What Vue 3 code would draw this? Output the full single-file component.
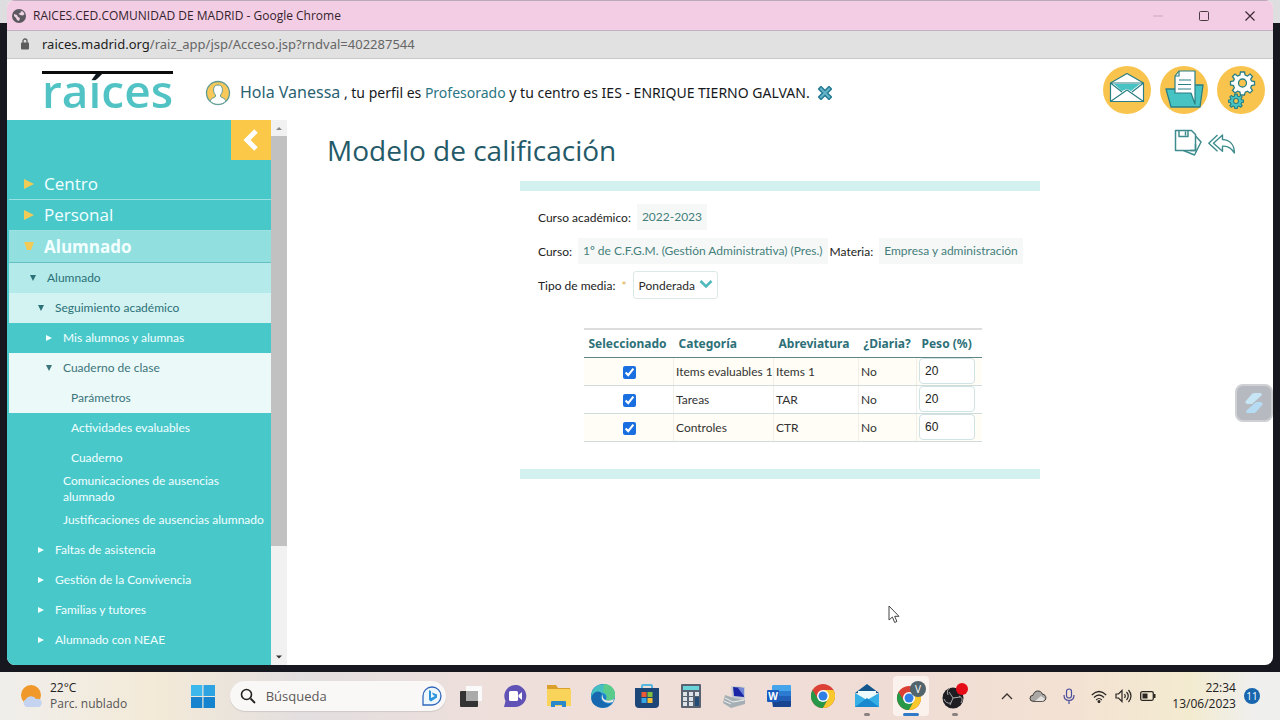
<script setup>
import { ref } from 'vue'

const sections = [
  { label: 'Centro', open: false },
  { label: 'Personal', open: false },
  { label: 'Alumnado', open: true },
]

const items = [
  { label: 'Alumnado', level: 1, arrow: 'down', tone: 'tone-a' },
  { label: 'Seguimiento académico', level: 2, arrow: 'down', tone: 'tone-b' },
  { label: 'Mis alumnos y alumnas', level: 3, arrow: 'right' },
  { label: 'Cuaderno de clase', level: 3, arrow: 'down', tone: 'tone-c' },
  { label: 'Parámetros', level: 4, tone: 'tone-c' },
  { label: 'Actividades evaluables', level: 4 },
  { label: 'Cuaderno', level: 4 },
  { label: 'Comunicaciones de ausencias alumnado', level: 3, tall: true },
  { label: 'Justificaciones de ausencias alumnado', level: 3 },
  { label: 'Faltas de asistencia', level: 2, arrow: 'right' },
  { label: 'Gestión de la Convivencia', level: 2, arrow: 'right' },
  { label: 'Familias y tutores', level: 2, arrow: 'right' },
  { label: 'Alumnado con NEAE', level: 2, arrow: 'right' },
]

const rows = ref([
  { on: true, name: 'Items evaluables 1', abbr: 'Items 1', daily: 'No', weight: '20' },
  { on: true, name: 'Tareas', abbr: 'TAR', daily: 'No', weight: '20' },
  { on: true, name: 'Controles', abbr: 'CTR', daily: 'No', weight: '60' },
])
const average = ref('Ponderada')
</script>

<template>
  <div class="desktop">
    <div class="window">
      <div class="titlebar">
        <svg width="14" height="14" viewBox="0 0 14 14" aria-hidden="true">
          <circle cx="7" cy="7" r="7" fill="#5b5860" />
          <path d="M2 5l3 1 1 2 2 1-1 3-2-1-1-2-2-2zM6 1.500l3 .5-.5 2-2 .5L8 6l3 .5L12.500 5 11 2.500z" fill="#efd3e2" />
        </svg>
        <span class="caption">RAICES.CED.COMUNIDAD DE MADRID - Google Chrome</span>
        <div class="winbtns">
          <button aria-label="Minimizar"><svg width="12" height="12" viewBox="0 0 12 12"><path d="M1 6h10" stroke="#c9a9bc" /></svg></button>
          <button aria-label="Maximizar"><svg width="12" height="12" viewBox="0 0 12 12"><rect x="1.500" y="1.500" width="9" height="9" rx="1" fill="none" stroke="#4a3a44" /></svg></button>
          <button aria-label="Cerrar"><svg width="12" height="12" viewBox="0 0 12 12"><path d="M1.500 1.500l9 9M10.500 1.500l-9 9" stroke="#3a2a34" stroke-width="1.200" /></svg></button>
        </div>
      </div>

      <div class="urlbar">
        <svg width="10" height="12" viewBox="0 0 10 12" aria-hidden="true">
          <rect x="1" y="4.500" width="8" height="7" rx="1" fill="#5c5c5c" />
          <path d="M3 5V3a2 2 0 0 1 4 0v2" fill="none" stroke="#5c5c5c" stroke-width="1.300" />
        </svg>
        <span class="url"><b>raices.madrid.org</b>/raiz_app/jsp/Acceso.jsp?rndval=402287544</span>
      </div>

      <header class="apphead">
        <div class="logo">raíces</div>
        <svg class="avatar" width="26" height="26" viewBox="0 0 26 26" aria-hidden="true">
          <circle cx="13" cy="13" r="11.500" fill="#f8c95a" stroke="#5d9a94" stroke-width="1.300" />
          <path d="M5 21c1-3 4-3 5.500-4.500V15C8.500 13 8.500 10.500 8.700 8.500 9 6 11 5 13 5s4 1 4.300 3.500c.2 2 .2 4.500-1.800 6.500v1.500C17 18 20 18 21 21c-4 4.500-12 4.500-16 0z" fill="#fff" stroke="#5d9a94" />
        </svg>
        <p class="hello">
          <a href="#" class="who">Hola Vanessa</a> , tu perfil es <a href="#">Profesorado</a> y tu centro es IES - ENRIQUE TIERNO GALVAN.
        </p>
        <button class="logout" aria-label="Salir">
          <svg width="14" height="14" viewBox="0 0 14 14"><path d="M3 3l8 8M11 3l-8 8" stroke="#267b94" stroke-width="5" stroke-linecap="square" /><path d="M3 3l8 8M11 3l-8 8" stroke="#65b4c8" stroke-width="2" stroke-linecap="square" /></svg>
        </button>
        <nav class="round">
          <button aria-label="Mensajes">
            <svg width="48" height="48" viewBox="0 0 48 48" stroke="#2a7f84" stroke-linejoin="round">
              <circle cx="24" cy="24" r="24" fill="#f9c44e" stroke="none" />
              <path d="M7.500 17L24 7.500 40.500 17v18.500h-33z" fill="#fff" stroke-width="1.200" />
              <path d="M11 18h26l-9 7-4-2-5 2z" fill="#46c3c2" stroke="none" />
              <path d="M7.500 17h33L29 26M7.500 17L19 26M7.500 35.500L24 24l16.500 11.500" fill="none" stroke-width="1.200" />
            </svg>
          </button>
          <button aria-label="Documentos">
            <svg width="48" height="48" viewBox="0 0 48 48" stroke="#2a7f84" stroke-linejoin="round">
              <circle cx="24" cy="24" r="24" fill="#f9c44e" stroke="none" />
              <path d="M6 23h10l1-4h26l-3 22H11z" fill="#46c3c2" stroke-width="1.300" />
              <path d="M15 27V10l4-5h16v33l-4-11z" fill="#fff" stroke-width="1.200" />
              <path d="M15 10h4V5M19 14h12M18 18.500h13M18 23h13" fill="none" stroke-width="1.200" />
            </svg>
          </button>
          <button aria-label="Configuración">
            <svg width="48" height="48" viewBox="0 0 48 48" stroke="#2a7f84">
              <circle cx="24" cy="24" r="24" fill="#f9c44e" stroke="none" />
              <g transform="translate(25.500 17)" stroke-width="1.300">
                <path d="M-2-11h4l.6 3L5-7l2.600-2L10-6.500 8.200-4 9-2l3 .5v3.500l-3 .5-.8 2.300L10 7.500 7.500 10 5 8.200l-2.300 1-.7 2.800h-4l-.6-2.900L-5 8.200-7.500 10-10 7.500-8.200 5-9 2.500-12 2v-3.500L-9-2l.8-2L-10-6.500-7.500-9-5-7l2.400-1z" fill="#fff" />
                <circle r="4" fill="#f9c44e" />
              </g>
              <g transform="translate(19 35) scale(.62)" stroke-width="1.800">
                <path d="M-2-11h4l.6 3L5-7l2.600-2L10-6.500 8.200-4 9-2l3 .5v3.500l-3 .5-.8 2.300L10 7.500 7.500 10 5 8.200l-2.300 1-.7 2.800h-4l-.6-2.900L-5 8.200-7.500 10-10 7.500-8.200 5-9 2.500-12 2v-3.500L-9-2l.8-2L-10-6.500-7.500-9-5-7l2.400-1z" fill="#46c3c2" />
                <circle r="4" fill="#f9c44e" />
              </g>
            </svg>
          </button>
        </nav>
      </header>

      <div class="body">
        <aside class="side">
          <button class="collapse" aria-label="Ocultar menú">
            <svg width="18" height="24" viewBox="0 0 18 24"><path d="M14 3L5 12l9 9" fill="none" stroke="#fff" stroke-width="5" /></svg>
          </button>
          <ul class="menu">
            <li v-for="s in sections" :key="s.label">
              <a href="#" class="section" :class="{ open: s.open }">
                <svg width="12" height="12" viewBox="0 0 12 12"><path :d="s.open ? 'M1 1h10L8 9H4z' : 'M1 1l10 5-10 5z'" fill="#f2cb57" /></svg>
                <span>{{ s.label }}</span>
              </a>
            </li>
            <li v-for="i in items" :key="i.label">
              <a href="#" class="item" :class="['level-' + i.level, i.tone, { tall: i.tall }]">
                <svg width="8" height="8" viewBox="0 0 8 8"><path v-if="i.arrow" :d="i.arrow === 'down' ? 'M1 1h6L4 7z' : 'M1 1l6 3-6 3z'" fill="currentColor" /></svg>
                <span>{{ i.label }}</span>
              </a>
            </li>
          </ul>
        </aside>
        <div class="scroll" aria-hidden="true">
          <svg width="16" height="16" viewBox="0 0 16 16"><path d="M5 10l3-3 3 3z" fill="#8a8a8a" /></svg>
          <div class="thumb"></div>
          <svg width="16" height="16" viewBox="0 0 16 16"><path d="M5 6.500h6l-3 3z" fill="#333" /></svg>
        </div>

        <main class="main">
          <div class="pagehead">
            <h1>Modelo de calificación</h1>
            <div class="tools">
              <button aria-label="Guardar">
                <svg width="28" height="28" viewBox="0 0 28 28" fill="none" stroke="#3f8c8e" stroke-width="1.500" stroke-linejoin="round">
                  <path d="M1.500 1.500h16l4 4v16h-20zM5 1.500v6h9v-6M11.500 2.500v4" />
                  <path d="M21.500 7l5.500 6-6.500 13-11-4.500M21.500 15v6.500H16" />
                </svg>
              </button>
              <button aria-label="Volver">
                <svg width="28" height="20" viewBox="0 0 28 20" fill="none" stroke="#3f8c8e" stroke-width="1.400" stroke-linejoin="round">
                  <path d="M9.500 1L.8 9.200l8.700 8M14.500 1L5.500 9.200l9 8v-5c5-.5 8.500 1 11.800 6.800C26.500 11 22 6 14.500 5.500z" />
                </svg>
              </button>
            </div>
          </div>

          <form class="panel" @submit.prevent>
            <div class="line">
              <span class="lab">Curso académico:</span><span class="val">2022-2023</span>
            </div>
            <div class="line">
              <span class="lab">Curso:</span><span class="val">1º de C.F.G.M. (Gestión Administrativa) (Pres.)</span>
              <span class="lab">Materia:</span><span class="val">Empresa y administración</span>
            </div>
            <div class="line">
              <label class="lab" for="media">Tipo de media:</label><span class="req">*</span>
              <span class="pick">
                <select id="media" v-model="average"><option>Ponderada</option></select>
                <svg width="14" height="10" viewBox="0 0 14 10" aria-hidden="true"><path d="M1.500 2L7 7.500 12.500 2" fill="none" stroke="#4fb9bb" stroke-width="2.600" /></svg>
              </span>
            </div>

            <table>
              <colgroup><col class="c1"><col class="c2"><col class="c3"><col class="c4"><col class="c5"></colgroup>
              <thead>
                <tr><th>Seleccionado</th><th>Categoría</th><th>Abreviatura</th><th>¿Diaria?</th><th>Peso (%)</th></tr>
              </thead>
              <tbody>
                <tr v-for="r in rows" :key="r.name">
                  <td class="check"><input v-model="r.on" type="checkbox" :aria-label="'Seleccionar ' + r.name"></td>
                  <td>{{ r.name }}</td>
                  <td>{{ r.abbr }}</td>
                  <td>{{ r.daily }}</td>
                  <td><input v-model="r.weight" class="weight" type="text" :aria-label="'Peso de ' + r.name"></td>
                </tr>
              </tbody>
            </table>
          </form>
        </main>
      </div>

      <button class="floating" aria-label="Asistente">
        <svg width="22" height="24" viewBox="0 0 22 24"><path d="M2 11L9 3q1-1 2-1h7l1 2-10 9H4z" fill="#c6e6f5" /><path d="M20 13l-7 8q-1 1-2 1H4l-1-2 10-9h5z" fill="#b5dcf3" /></svg>
      </button>
      <svg class="cursor" width="12" height="19" viewBox="0 0 12 19" aria-hidden="true"><path d="M1 1v14l3.400-3 2.300 5.500 2.200-1L6.700 11.300H11z" fill="#fff" stroke="#444" /></svg>
    </div>

    <footer class="taskbar">
      <div class="weather">
        <svg width="24" height="24" viewBox="0 0 24 24" aria-hidden="true"><circle cx="11" cy="11" r="10" fill="#f0982a" /><path d="M6 23a4.500 4.500 0 0 1 0-8 6 6 0 0 1 10 0 4 4 0 0 1 3 8z" fill="#c3d3f0" /></svg>
        <div><div>22°C</div><div class="dim">Parc. nublado</div></div>
      </div>

      <div class="center">
        <button class="app" aria-label="Inicio"><svg width="24" height="24" viewBox="0 0 24 24"><path d="M0 1h11.300v11H0z" fill="#3cb8ec" /><path d="M12.500 1H24v11H12.500z" fill="#2ea3e2" /><path d="M0 13h11.300v11H0zM12.500 13H24v11H12.500z" fill="#1583cd" /></svg></button>
        <label class="search">
          <svg width="16" height="16" viewBox="0 0 16 16"><circle cx="6.500" cy="6.500" r="5" fill="none" stroke="#222" stroke-width="1.600" /><path d="M10.500 10.500L15 15" stroke="#222" stroke-width="1.800" /></svg>
          <input type="text" placeholder="Búsqueda" aria-label="Búsqueda">
          <svg width="20" height="20" viewBox="0 0 20 20"><path d="M1 19v-9a9 9 0 1 1 9 9z" fill="#eef8fc" stroke="#3267bd" stroke-width="1.300" /><path d="M7 4l2 1v7l4-2-2-1-1-2.500 5 2v3l-6 4-2-1.500z" fill="#2c93dc" /></svg>
        </label>
        <button class="app" aria-label="Vista de tareas"><svg width="24" height="24" viewBox="0 0 24 24"><rect x="7" y="2" width="16" height="15" fill="#fafafa" /><rect x="1" y="7" width="18" height="16" rx="1" fill="#333" /><rect x="7" y="7" width="12" height="10" fill="#aaa" /></svg></button>
        <button class="app" aria-label="Chat"><svg width="24" height="24" viewBox="0 0 24 24"><path d="M1 23l1.500-6A11 11 0 1 1 12 23z" fill="#6153b5" /><rect x="6" y="7" width="9" height="10" rx="1.500" fill="#fff" /><path d="M15.500 11L19 8v8l-3.500-3z" fill="#fff" /></svg></button>
        <button class="app" aria-label="Explorador"><svg width="26" height="24" viewBox="0 0 26 24"><path d="M1 1h9l2 3h12v6H1z" fill="#dba02c" /><path d="M1 5h24v17H1z" fill="#f9d35a" /><path d="M5 23v-5q0-1 1-1h13q1 0 1 1v5h-4v-2H9v2z" fill="#2d87cb" /></svg></button>
        <button class="app" aria-label="Edge"><svg width="24" height="24" viewBox="0 0 24 24"><circle cx="12" cy="12" r="12" fill="#1b82ca" /><path d="M.5 10C3-3 22-3 24 10c.5 6-5 8-9 6 2-4-1-7-5-7S3 10 .5 14z" fill="#45bfc0" /><path d="M13 .1C20 0 25 6 24 12c-.5 4-5 5.500-9 4 2-4 0-7-3-8z" fill="#5bcb8c" /><path d="M.5 13c2-6 9-7 10-3-3 4 1 11 10 10C12 27-1 23 .5 13z" fill="#1768ae" /><path d="M12 10c-2 5 4 9 11 5l-1 3c-8 3-14-3-10-8z" fill="#f3e8e3" /></svg></button>
        <button class="app" aria-label="Tienda"><svg width="24" height="24" viewBox="0 0 24 24"><path d="M7 5V2q0-1 1-1h8q1 0 1 1v3" fill="none" stroke="#55b6df" stroke-width="2" /><path d="M0 4h24v16q0 4-4 4H4q-4 0-4-4z" fill="#1c4678" /><path d="M6.500 8h5v5h-5z" fill="#ed5836" /><path d="M12.500 8h5v5h-5z" fill="#83bd3d" /><path d="M6.500 14h5v5h-5z" fill="#35a7e8" /><path d="M12.500 14h5v5h-5z" fill="#f8bd30" /></svg></button>
        <button class="app" aria-label="Calculadora"><svg width="20" height="24" viewBox="0 0 20 24"><rect width="20" height="24" rx="1" fill="#586271" /><path d="M2 2h16v4H2z" fill="#68d4d9" /><path d="M2 8h4v4H2zM8 8h4v4H8zM14 8h4v4h-4zM2 13h4v4H2zM8 13h4v4H8zM2 18h4v4H2zM8 18h4v4H8z" fill="#dce2e8" /><path d="M14 13h4v9h-4z" fill="#234b78" /></svg></button>
        <button class="app" aria-label="Equipo remoto"><svg width="26" height="24" viewBox="0 0 26 24"><path d="M9 2l14 1v12H10z" fill="#c5cbd0" /><path d="M11 3l11 1v9l-10-1z" fill="#1a25a5" /><path d="M16 4l6 0v8z" fill="#7187d5" /><path d="M3 11l9 3 11 2v4l-14 4-8-5z" fill="#a5afb4" /><path d="M3 14l8 4 11-2M2 17l7 3" fill="none" stroke="#edf0f2" /></svg></button>
        <button class="app" aria-label="Word"><svg width="24" height="22" viewBox="0 0 24 22"><path d="M6 0h17q1 0 1 1v6H5V1z" fill="#45a4ea" /><path d="M5 6h19v5H5z" fill="#2b7bd3" /><path d="M5 11h19v5H5z" fill="#205fb5" /><path d="M5 16h19v5q0 1-1 1H6z" fill="#17458f" /><rect y="5" width="12" height="12" rx="1" fill="#185abd" /><text x="6" y="15" text-anchor="middle" font-family="Open Sans, sans-serif" font-weight="700" font-size="10" fill="#fff">W</text></svg></button>
        <button class="app" aria-label="Chrome"><svg width="24" height="24" viewBox="0 0 24 24"><circle cx="12" cy="12" r="12" fill="#dc4035" /><path d="M1.600 6A12 12 0 0 0 12 24l5-9-5-3-5 3z" fill="#269847" /><path d="M12 24a12 12 0 0 0 10.400-18H12l5 9z" fill="#f9c82d" /><circle cx="12" cy="12" r="6" fill="#fff" /><circle cx="12" cy="12" r="4.500" fill="#317ee5" /></svg></button>
        <button class="app run" aria-label="Correo"><svg width="26" height="24" viewBox="0 0 26 24"><path d="M1 9L13 0l12 9z" fill="#12568c" /><path d="M4 7h18v9H4z" fill="#effafd" /><path d="M1 9l12 7 12-7v14H1z" fill="#36afe7" /><path d="M1 23l12-9 12 9z" fill="#1888cf" /></svg></button>
        <button class="app current" aria-label="Chrome, Vanessa"><svg width="30" height="30" viewBox="0 0 30 30"><circle cx="13" cy="17" r="12" fill="#dc4035" /><path d="M2.600 11A12 12 0 0 0 13 29l5-9-5-3-5 3z" fill="#269847" /><path d="M13 29a12 12 0 0 0 10.400-18H13l5 9z" fill="#f9c82d" /><circle cx="13" cy="17" r="6" fill="#fff" /><circle cx="13" cy="17" r="4.500" fill="#317ee5" /><circle cx="22" cy="8" r="8" fill="#52646c" /><text x="22" y="12" text-anchor="middle" font-family="Open Sans, sans-serif" font-size="10" fill="#fff">V</text></svg></button>
        <button class="app run" aria-label="OBS"><svg width="28" height="26" viewBox="0 0 28 26"><circle cx="12" cy="15" r="10.500" fill="#1e1d22" /><path d="M12 15L8 9M12 15l7-1M12 15l-3 7M7 12q-2-5 2-7M18 13q5 2 2 7M10 20q-5 1-7-4" fill="none" stroke="#aaa" /><circle cx="21" cy="6" r="6" fill="#e60c17" /></svg></button>
      </div>

      <div class="tray">
        <svg width="12" height="8" viewBox="0 0 12 8"><path d="M1 7l5-5 5 5" fill="none" stroke="#3a302d" stroke-width="1.300" /></svg>
        <svg width="18" height="12" viewBox="0 0 18 12"><path d="M4 11.300a3 3 0 0 1 0-6C5 0 12-.5 13.500 4.300c4.500 0 4.500 7 0 7z" fill="#aaa7a5" stroke="#3c3937" /><path d="M6 11l6-5 4 3-2 2z" fill="#e3e0de" /></svg>
        <svg width="12" height="16" viewBox="0 0 12 16" fill="none" stroke="#4a4c9c" stroke-width="1.200"><rect x="3.500" y="1" width="5" height="9" rx="2.500" /><path d="M1 7q0 5.500 5 5.500T11 7M6 12.500V16" /></svg>
        <span class="status">
          <svg width="16" height="13" viewBox="0 0 16 13" fill="none" stroke="#2a2624" stroke-width="1.200"><path d="M.8 5q7.200-7 14.400 0M3 7.500q5-5 10 0M5.200 10q2.800-3 5.600 0" /><circle cx="8" cy="11.500" r=".9" fill="#2a2624" /></svg>
          <svg width="17" height="14" viewBox="0 0 17 14" fill="none" stroke="#2a2624" stroke-width="1.200"><path d="M1 5h2.500L7 1.500v11L3.500 9H1zM9.500 5q1.500 2 0 4M11.500 3q3.500 4 0 8M13.500 1q5 6 0 12" /></svg>
          <svg width="16" height="12" viewBox="0 0 16 12"><rect x=".7" y="1.700" width="12.600" height="8.600" rx="1.500" fill="none" stroke="#2a2624" stroke-width="1.300" /><path d="M2.500 3.500h5v5h-5zM14 4h1.500v4H14z" fill="#2a2624" /></svg>
        </span>
        <div class="clock"><div>22:34</div><div>13/06/2023</div></div>
        <span class="count">11</span>
      </div>
    </footer>
  </div>
</template>

<style>
html, body { margin: 0; }
</style>

<style scoped>
* { box-sizing: border-box; }
button { border: 0; padding: 0; background: none; font: inherit; display: inline-flex; align-items: center; justify-content: center; }
a { color: inherit; text-decoration: none; }
svg { display: block; flex: none; }

.desktop { min-height: 100vh; display: flex; flex-direction: column; background: linear-gradient(#dedde0 23px, #17181f 23px); font-family: "Open Sans", "Noto Sans", sans-serif; color: #222; }
.window { position: relative; flex: 1; display: flex; flex-direction: column; margin: 0 7px 7px; border-radius: 8px; overflow: hidden; background: #fff; }

.titlebar { height: 31px; display: flex; align-items: center; padding-left: 5px; gap: 7px; background: #f3cde4; border-top: 1px solid #bba8b8; border-bottom: 1px solid #c3aec6; }
.caption { flex: 1; font-size: 12px; color: #33232d; }
.winbtns { display: flex; }
.winbtns button { width: 46px; height: 28px; }
.urlbar { height: 28px; display: flex; align-items: center; gap: 12px; padding: 0 0 1px 13px; background: #e1e1e1; border-bottom: 1px solid #c8c8c8; }
.url { font-family: "Noto Sans", sans-serif; font-size: 13px; line-height: 16px; color: #666; }
.url b { font-weight: 400; color: #1d1d1d; }

.apphead { height: 61px; display: flex; align-items: center; padding: 0 8px 0 35px; }
.logo { width: 131px; height: 46px; margin-top: 12px; border-top: 3px solid #0b0b0b; font-size: 46px; line-height: 32px; font-weight: 600; align-self: flex-start; color: transparent; background: linear-gradient(#101820 6px, #52c3c4 6px); background-clip: text; -webkit-background-clip: text; }
.avatar { margin: 7px 9px 0 32px; }
.hello { margin: 5px 0 0; font-family: "Noto Sans", sans-serif; font-size: 14px; color: #16191c; white-space: nowrap; }
.hello a { color: #2a7583; }
.hello .who { font-size: 16px; color: #2b6272; }
.logout { margin: 6px 0 0 8px; }
.round { margin-left: auto; display: flex; gap: 9px; }

.body { flex: 1; display: flex; }
.side { width: 264px; display: flex; flex-direction: column; background: #49c8ca; color: #f2ffff; }
.collapse { align-self: flex-end; width: 40px; height: 40px; background: #fbc947; }
.menu { list-style: none; margin: 9px 0 0; padding: 0 0 10px 2px; }
.section { display: flex; align-items: center; gap: 9px; height: 31px; padding-left: 14px; font-size: 17px; line-height: 30px; border-bottom: 1px solid #9be2e2; }
.section.open { height: 32px; font-weight: 700; background: #92dfe0; border-bottom-color: #68bfc1; }
.item { display: flex; align-items: center; gap: 10px; height: 30px; font-family: Lato, sans-serif; font-size: 12px; line-height: 16px; padding-right: 4px; }
.item.tall { height: 32px; padding-right: 40px; }
.level-1 { padding-left: 20px; }
.level-2 { padding-left: 28px; }
.level-3 { padding-left: 36px; }
.level-4 { padding-left: 44px; }
.tone-a { background: #b4eaea; color: #2b7177; }
.tone-b { background: #d3f2f2; color: #2b7177; }
.tone-c { background: #ecf9f9; color: #3b757a; }
.scroll { width: 16px; display: flex; flex-direction: column; justify-content: space-between; background: #f1f1f1; }
.thumb { flex: 1; margin-bottom: 103px; background: #c1c1c1; }

.main { flex: 1; min-width: 0; }
.pagehead { display: flex; justify-content: space-between; padding: 9px 37px 0 40px; height: 61px; }
h1 { margin: 3px 0 0; font-size: 28px; line-height: 36px; font-weight: 400; color: #245a68; }
.tools { display: flex; align-items: flex-start; gap: 6px; }
.tools button:last-child { margin-top: 5px; }

.panel { width: 520px; margin: 0 auto; padding: 9px 13px 27px 18px; border-top: 10px solid #d3f2ef; border-bottom: 10px solid #d3f2ef; font-family: Lato, sans-serif; font-size: 12px; }
.line { display: flex; align-items: center; height: 34px; white-space: nowrap; }
.lab { color: #222; }
.val { margin: 0 2px 0 6px; padding: 0 5px; line-height: 26px; background: #f6f8f8; color: #457f7b; }
.req { margin: 0 6px; color: #dcb050; }
.pick { position: relative; display: flex; }
.pick select { appearance: none; width: 85px; height: 28px; padding: 0 0 0 5px; border: 1px solid #dce9e9; border-radius: 3px; background: #fff; color: #2a2a2a; font: inherit; }
.pick svg { position: absolute; right: 5px; top: 8px; pointer-events: none; }

table { width: 398px; margin: 26px auto 0; border-collapse: collapse; table-layout: fixed; border-top: 2px solid #ddd; }
.c1 { width: 90px; } .c2 { width: 100px; } .c3 { width: 85px; } .c4 { width: 58px; } .c5 { width: 65px; }
th { height: 28px; padding: 0 0 0 5px; text-align: left; white-space: nowrap; font-family: "Noto Sans", sans-serif; color: #2d7078; font-weight: 700; border-bottom: 1px solid #5f8587; }
td { height: 28px; padding: 0 0 0 2px; white-space: nowrap; color: #333; border-bottom: 1px solid #cfdcdc; border-right: 1px solid #f0efe9; }
tbody tr:nth-child(odd) { background: #fffdf5; }
td:last-child { border-right: 0; }
.check { text-align: center; }
.check input { width: 13px; height: 13px; margin: 0; vertical-align: middle; accent-color: #1a6fe0; }
.weight { display: block; width: 56px; height: 26px; padding: 0 5px; border: 1px solid #cfe3e3; border-radius: 4px; background: #fff; font: 12px "Liberation Sans", Arial, sans-serif; color: #222; }

.floating { position: absolute; right: 0; top: 384px; width: 38px; height: 38px; border-radius: 8px; background: #b7b9c1; border: 2px solid #cfd0d4; }
.cursor { position: absolute; left: 881px; top: 605px; }

.taskbar { height: 48px; display: flex; align-items: center; justify-content: space-between; padding: 0 20px; font-size: 12px; line-height: 16px; background: linear-gradient(90deg, #f0eeec, #f3ead7 12%, #e3dee0 24%, #efdfda 40%, #efdcd5 70%, #f3e2d3 84%, #f3ebd0 93%, #efefee 98%); }
.weather { display: flex; align-items: center; gap: 6px; width: 150px; }
.dim { color: #555; }
.center { display: flex; align-items: center; margin-right: 14px; }
.app { position: relative; width: 44px; height: 40px; }
.search { display: flex; align-items: center; gap: 10px; width: 216px; height: 30px; margin: 0 3px 0 5px; padding: 0 4px 0 10px; border-radius: 15px; background: #faf8f7; box-shadow: 0 1px 1px #cfc8c6; }
.search input { flex: 1; min-width: 0; border: 0; padding: 0; background: none; outline: 0; font: inherit; font-size: 13px; }
.search input::placeholder { color: #5c5858; opacity: 1; }
.run::after, .current::after { content: ""; position: absolute; bottom: 0; left: 50%; width: 6px; height: 3px; margin-left: -3px; border-radius: 2px; background: #8b8280; }
.current::before { content: ""; position: absolute; inset: 0 4px; border-radius: 4px; background: #fbf2ee; }
.current svg { position: relative; }
.current::after { width: 16px; margin-left: -8px; background: #3079c6; }
.tray { display: flex; align-items: center; gap: 16px; }
.status { display: flex; align-items: center; gap: 8px; }
.clock { text-align: right; }
.count { width: 16px; height: 16px; margin-left: -8px; border-radius: 8px; background: #1766ae; color: #fff; font-size: 10px; text-align: center; }
</style>
